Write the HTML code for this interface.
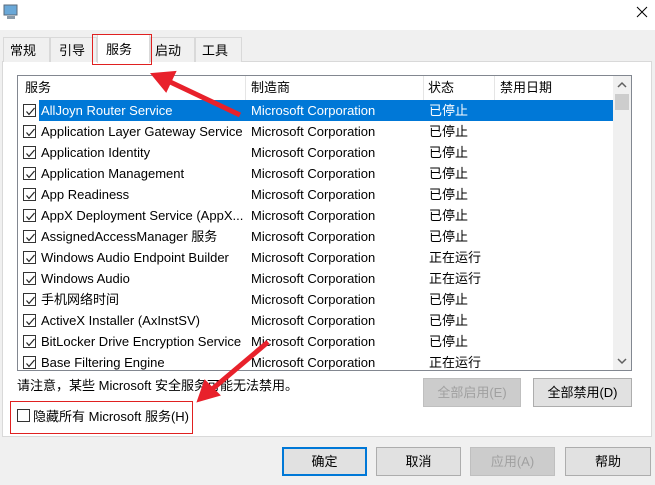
<!DOCTYPE html>
<html><head><meta charset="utf-8"><style>
*{box-sizing:border-box;margin:0;padding:0}
body{width:655px;height:485px;background:#f0f0f0;font-family:"Liberation Sans","Noto Sans CJK SC",sans-serif;font-size:13px;color:#000;position:relative;overflow:hidden}
.abs{position:absolute}
.tab{position:absolute;top:37px;height:25px;border:1px solid #d9d9d9;border-bottom:none;background:#f0f0f0;padding:2px 0 0 6px}
.panel{position:absolute;left:2px;top:61px;width:650px;height:376px;background:#fff;border:1px solid #d9d9d9}
.list{position:absolute;left:17px;top:75px;width:615px;height:296px;border:1px solid #828790;background:#fff;overflow:hidden}
.row{position:absolute;left:0;height:21px;width:595px;line-height:21px;white-space:nowrap}
.row span{position:absolute}
.cb{position:absolute;left:5px;top:4px;width:13px;height:13px;border:1px solid #333;background:#fff}
.cb svg{position:absolute;left:1px;top:1px}
.btn{position:absolute;height:29px;border:1px solid #adadad;background:#e1e1e1;text-align:center;line-height:27px}
.dis{color:#a0a0a0;background:#cccccc;border-color:#bfbfbf}
</style></head><body>
<div class="abs" style="left:0;top:0;width:655px;height:30px;background:#fff"></div>
<svg class="abs" style="left:3px;top:4px" width="16" height="16"><rect x="1" y="1" width="13" height="10" fill="#6aa8d8" stroke="#5a6a7a"/><rect x="4" y="12" width="8" height="3" fill="#8a9aa8"/></svg>
<svg class="abs" style="left:636px;top:6px" width="12" height="12"><path d="M1 1L11 11M11 1L1 11" stroke="#000" stroke-width="1"/></svg>
<div class="panel"></div>
<div class="tab" style="left:3px;width:47px">常规</div>
<div class="tab" style="left:50px;width:47px;padding-left:8px">引导</div>
<div class="tab" style="left:150px;width:45px;padding-left:4px">启动</div>
<div class="tab" style="left:195px;width:47px">工具</div>
<div class="tab" style="left:97px;top:34px;width:53px;height:29px;background:#fff;padding:4px 0 0 8px">服务</div>
<div class="abs" style="left:92px;top:34px;width:60px;height:31px;border:1px solid #e02020"></div>
<div class="list">
<div class="row" style="top:0;height:24px;line-height:24px;background:#fff">
<span style="left:7px">服务</span><span style="left:233px">制造商</span><span style="left:410px">状态</span><span style="left:482px">禁用日期</span>
<div class="abs" style="left:227px;top:0;width:1px;height:24px;background:#e5e5e5"></div>
<div class="abs" style="left:405px;top:0;width:1px;height:24px;background:#e5e5e5"></div>
<div class="abs" style="left:476px;top:0;width:1px;height:24px;background:#e5e5e5"></div>
</div>
<div class="abs" style="left:595px;top:0;width:18px;height:294px;background:#f0f0f0"></div>
<svg class="abs" style="left:599px;top:5px" width="10" height="8"><path d="M1 6L5 2L9 6" stroke="#606060" fill="none" stroke-width="1.5"/></svg>
<div class="abs" style="left:597px;top:18px;width:14px;height:16px;background:#cdcdcd"></div>
<svg class="abs" style="left:599px;top:281px" width="10" height="8"><path d="M1 2L5 6L9 2" stroke="#606060" fill="none" stroke-width="1.5"/></svg>
</div>
<div id="rows" class="abs" style="left:18px;top:100px"></div>
<script>
var d=[["AllJoyn Router Service","已停止"],["Application Layer Gateway Service","已停止"],["Application Identity","已停止"],["Application Management","已停止"],["App Readiness","已停止"],["AppX Deployment Service (AppX...","已停止"],["AssignedAccessManager 服务","已停止"],["Windows Audio Endpoint Builder","正在运行"],["Windows Audio","正在运行"],["手机网络时间","已停止"],["ActiveX Installer (AxInstSV)","已停止"],["BitLocker Drive Encryption Service","已停止"],["Base Filtering Engine","正在运行"]];
var h="";d.forEach(function(r,i){var s=i==0;h+='<div class="row" style="top:'+(i*21)+'px;'+(s?'color:#fff;':'')+'">'+(s?'<div class="abs" style="left:21px;top:0;width:574px;height:21px;background:#0078d7"></div>':'')+'<div class="cb"><svg width="11" height="11"><path d="M1.5 5.5L4 8.5L9.5 2" stroke="#222" fill="none" stroke-width="1.2"/></svg></div><span style="left:23px">'+r[0]+'</span><span style="left:233px">Microsoft Corporation</span><span style="left:411px">'+r[1]+'</span></div>'});
document.getElementById("rows").innerHTML=h;
</script>
<div class="abs" style="left:17px;top:375px">请注意，某些 Microsoft 安全服务可能无法禁用。</div>
<div class="btn dis" style="left:423px;top:378px;width:98px">全部启用(E)</div>
<div class="btn" style="left:533px;top:378px;width:99px">全部禁用(D)</div>
<div class="abs" style="left:17px;top:409px;width:13px;height:13px;border:1px solid #333;background:#fff"></div>
<div class="abs" style="left:33px;top:406px">隐藏所有 Microsoft 服务(H)</div>
<div class="abs" style="left:10px;top:401px;width:183px;height:33px;border:1px solid #e02020"></div>
<div class="btn" style="left:282px;top:447px;width:85px;border:2px solid #0078d7;line-height:25px">确定</div>
<div class="btn" style="left:376px;top:447px;width:85px">取消</div>
<div class="btn dis" style="left:470px;top:447px;width:85px">应用(A)</div>
<div class="btn" style="left:565px;top:447px;width:86px">帮助</div>
<svg class="abs" style="left:0;top:0" width="655" height="485">
<path d="M240 115L166 80" stroke="#e8212b" stroke-width="5"/><path d="M152 74L175 72L166 91Z" fill="#e8212b" stroke="#e8212b" stroke-width="2"/>
<path d="M268 342L210 391" stroke="#e8212b" stroke-width="5"/><path d="M198 401L205 381L219 395Z" fill="#e8212b" stroke="#e8212b" stroke-width="2"/>
</svg>
</body></html>
